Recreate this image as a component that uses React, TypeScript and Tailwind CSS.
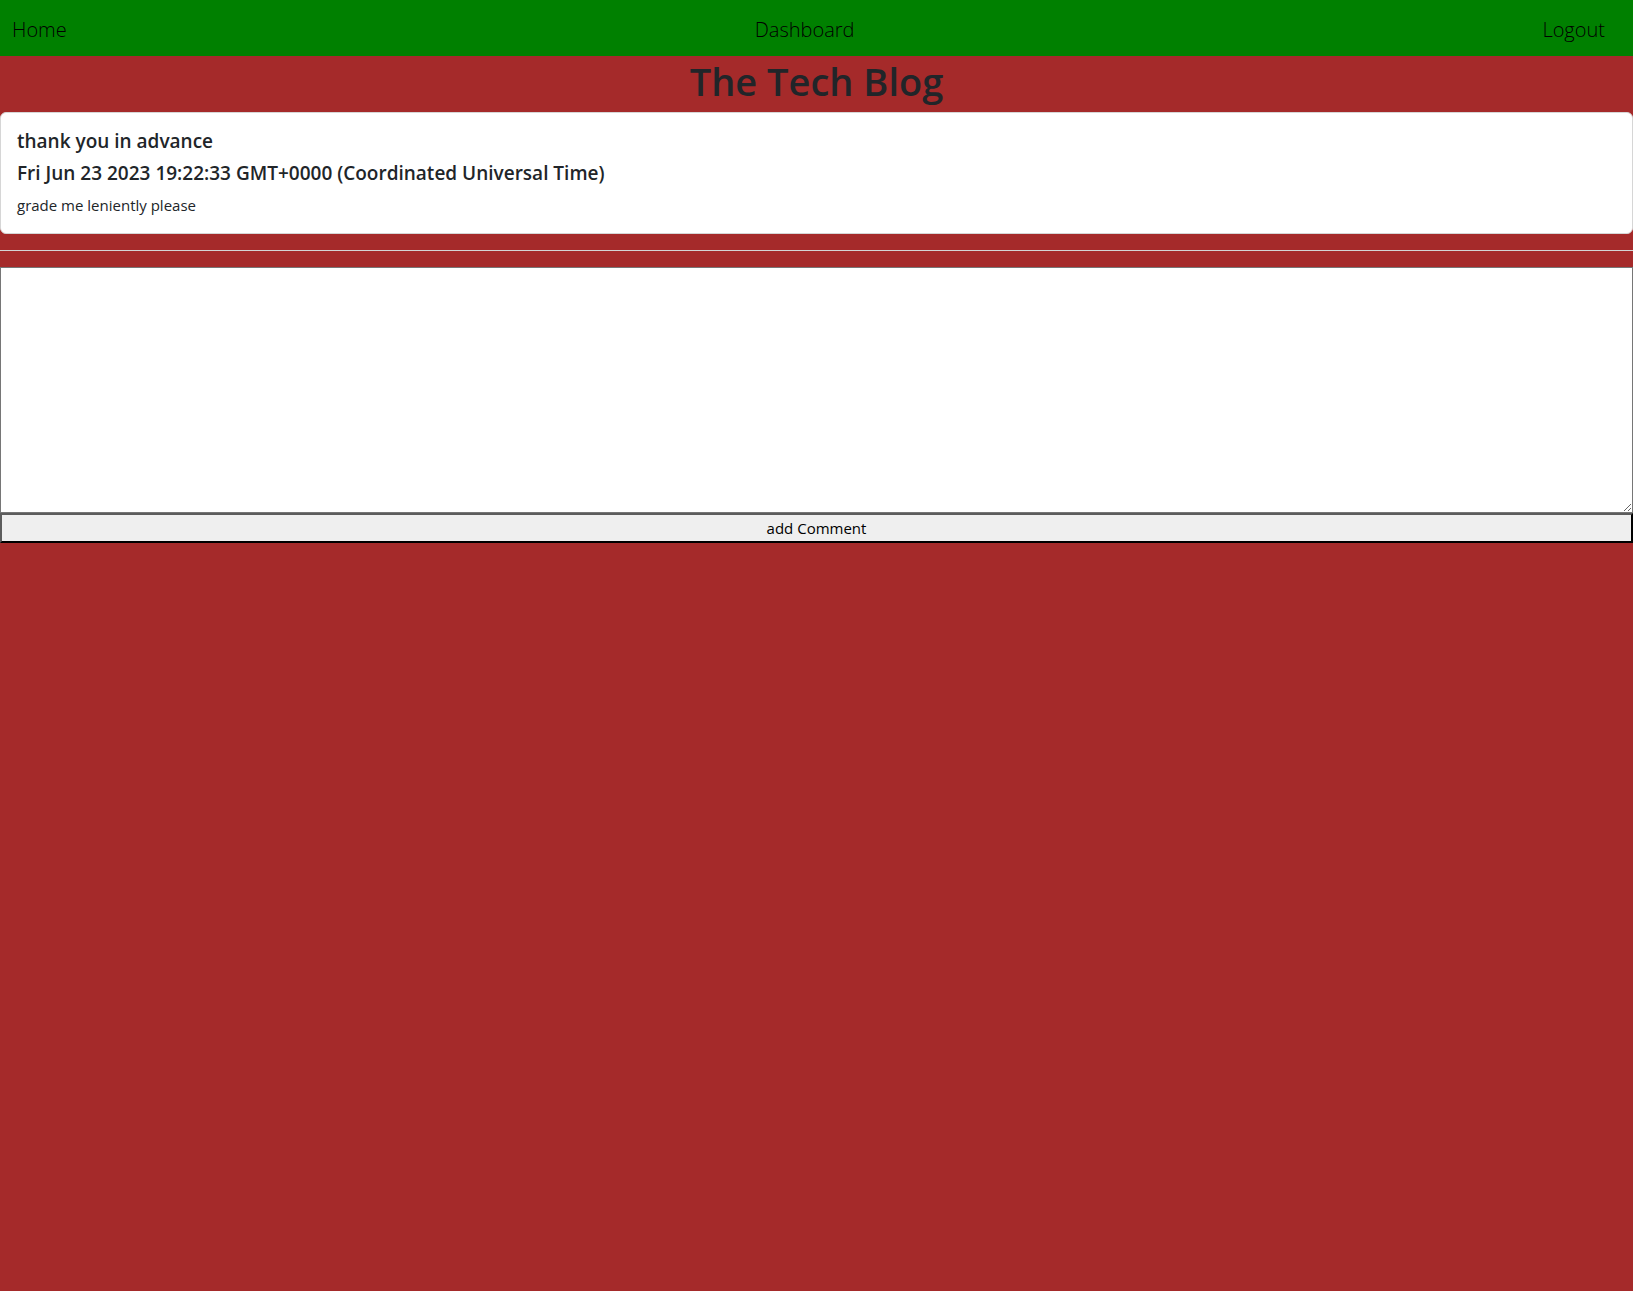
export default function App() {
  return (
    <div
      className="min-h-screen bg-[#a52a2a] text-[#212529]"
      style={{ fontFamily: '"Open Sans", "Noto Sans", sans-serif' }}
    >
      <nav className="flex h-14 items-center justify-between bg-[#008000] pt-1 pl-3 pr-7 text-[20px] font-light text-black">
        <a href="#">Home</a>
        <a href="#">Dashboard</a>
        <a href="#">Logout</a>
      </nav>

      <h1 className="mb-2 pt-0.5 text-center text-[38px] font-semibold leading-[46px]">The Tech Blog</h1>

      <div className="rounded-md border border-[#d6d6d6] bg-white">
        <div className="p-4">
          <h5 className="mb-2 text-[19px] font-semibold leading-6">thank you in advance</h5>
          <h5 className="mb-2 text-[19px] font-semibold leading-6">
            Fri Jun 23 2023 19:22:33 GMT+0000 (Coordinated Universal Time)
          </h5>
          <p className="text-[15px] leading-6">grade me leniently please</p>
        </div>
      </div>

      <hr className="my-4 border-t border-[#d4d4d4]" />

      <form className="flex flex-col">
        <textarea className="block h-[246px] w-full border border-[#767676] bg-white" />
        <button
          type="button"
          className="w-full border-2 border-t-[#5c5c5c] border-l-[#5c5c5c] border-r-black border-b-black bg-[#efefef] text-[15px] leading-[26px] text-black"
        >
          add Comment
        </button>
      </form>
    </div>
  );
}
